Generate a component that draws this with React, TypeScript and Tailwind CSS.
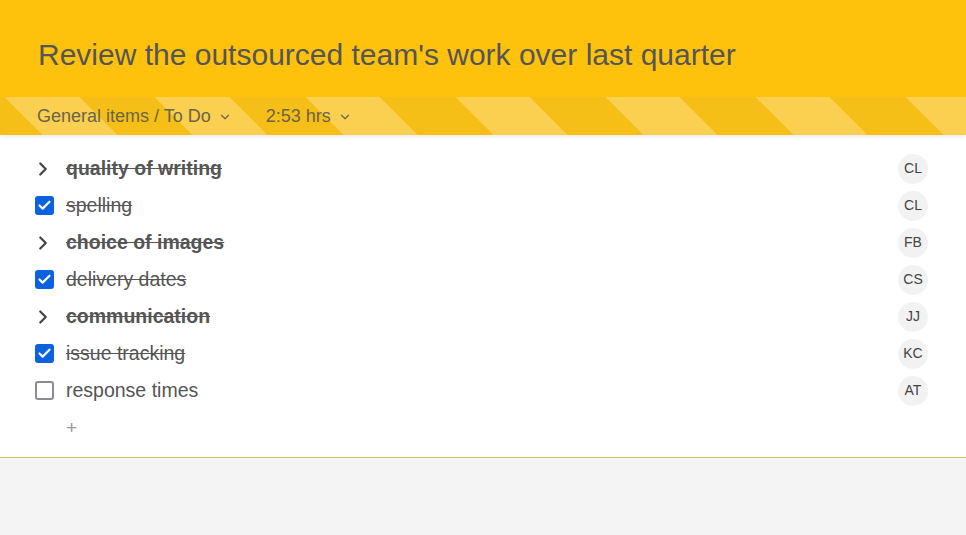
import { ChevronRight, ChevronDown, Check } from 'lucide-react'

type Item = {
  label: string
  initials: string
  kind: 'group' | 'done' | 'open'
}

const items: Item[] = [
  { label: 'quality of writing', initials: 'CL', kind: 'group' },
  { label: 'spelling', initials: 'CL', kind: 'done' },
  { label: 'choice of images', initials: 'FB', kind: 'group' },
  { label: 'delivery dates', initials: 'CS', kind: 'done' },
  { label: 'communication', initials: 'JJ', kind: 'group' },
  { label: 'issue tracking', initials: 'KC', kind: 'done' },
  { label: 'response times', initials: 'AT', kind: 'open' },
]

export default function App() {
  return (
    <div className="min-h-[535px] bg-[#f4f4f4] font-['Liberation_Sans',Arial,sans-serif]">
      {/* Header */}
      <div className="relative z-10 bg-[#ffc20c] shadow-[0_2px_4px_rgba(0,0,0,0.08)]">
        <div className="h-[97px] pl-[38px] pt-[37px]">
          <h1 className="text-[30px] leading-[36px] text-[#555555]">
            Review the outsourced team's work over last quarter
          </h1>
        </div>
        <div className="flex h-[38px] items-center gap-[34px] bg-[repeating-linear-gradient(45deg,#f6bf17_0px,#f6bf17_30.4px,#fbcf50_30.4px,#fbcf50_83.4px,#f6bf17_83.4px,#f6bf17_106.07px)] pl-[37px] text-[18px] text-[#6a6448]">
          <span className="flex items-center gap-[7px]">
            General items / To Do
            <ChevronDown size={14} strokeWidth={2} className="mt-[1px]" />
          </span>
          <span className="flex items-center gap-[7px]">
            2:53 hrs
            <ChevronDown size={14} strokeWidth={2} className="mt-[1px]" />
          </span>
        </div>
      </div>

      {/* List */}
      <div className="border-b border-[#d3c35a] bg-white pb-[11px] pt-[15px]">
        {items.map((item, i) => (
          <Row key={i} item={item} />
        ))}
        <div className="flex h-[37px] items-center pl-[66px]">
          <span className="text-[19px] font-light leading-none text-[#9a9a9a]">+</span>
        </div>
      </div>
    </div>
  )
}

function Row({ item }: { item: Item }) {
  const struck = item.kind !== 'open'
  return (
    <div className="flex h-[37px] items-center pl-[35px] pr-[38px]">
      <div className="flex w-[31px] items-center">
        {item.kind === 'group' && (
          <ChevronRight size={22} strokeWidth={2.4} className="-ml-[3px] text-[#444444]" />
        )}
        {item.kind === 'done' && (
          <span className="flex h-[19px] w-[19px] items-center justify-center rounded-[3px] bg-[#0b61e0]">
            <Check size={15} strokeWidth={3.4} className="text-white" />
          </span>
        )}
        {item.kind === 'open' && (
          <span className="h-[19px] w-[19px] rounded-[3px] border-2 border-[#8b8b95] bg-white" />
        )}
      </div>
      <span
        className={
          'flex-1 text-[19.5px] text-[#555555] ' +
          (item.kind === 'group' ? 'font-bold ' : '') +
          (struck ? 'line-through decoration-[#555555]' : '')
        }
      >
        {item.label}
      </span>
      <span className="flex h-[30px] w-[30px] items-center justify-center rounded-full bg-[#f2f2f2] text-[14px] text-[#444444]">
        {item.initials}
      </span>
    </div>
  )
}
